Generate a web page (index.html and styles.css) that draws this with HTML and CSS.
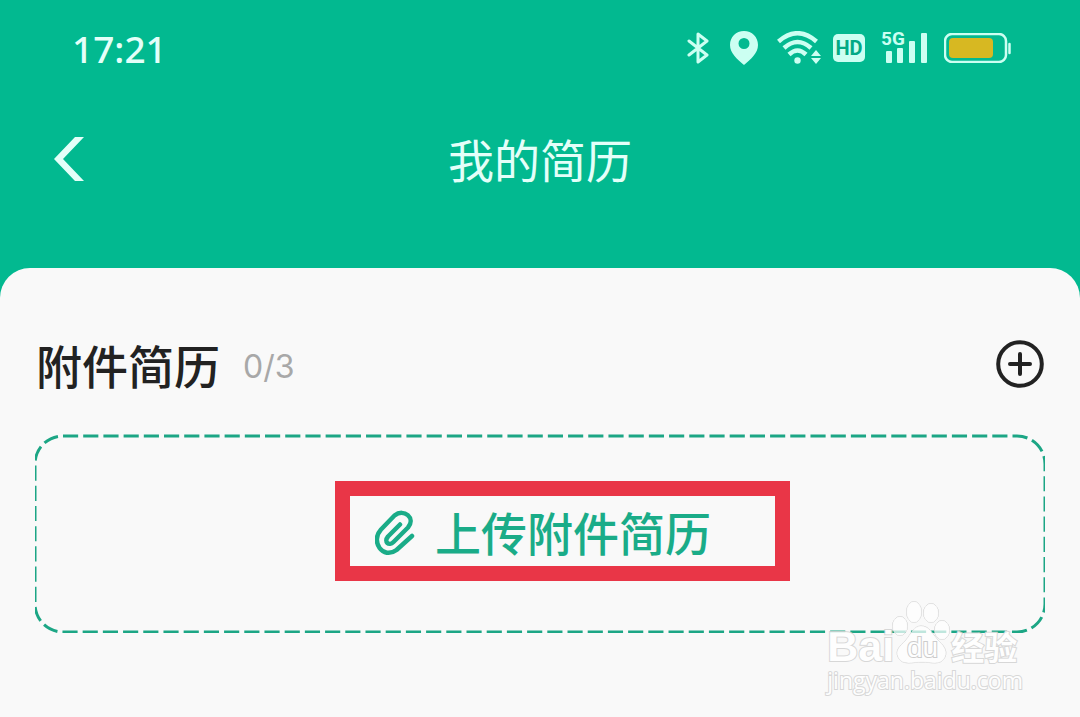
FILE: index.html
```html
<!DOCTYPE html>
<html lang="zh-CN">
<head>
  <meta charset="UTF-8">
  <meta name="viewport" content="width=device-width, initial-scale=1.0">
  <title>我的简历</title>
  <link rel="stylesheet" href="styles.css">
</head>
<body>
  <div class="status-bar">
    <span class="time">17:21</span>
    <div class="status-icons">
      <svg class="bluetooth" width="22" height="34" viewBox="0 0 22 34" fill="none" stroke="currentColor" stroke-width="3" stroke-linejoin="round" stroke-linecap="round">
        <path d="M2 10 L20 24 L11 31 V3 L20 10 L2 24"/>
      </svg>
      <svg class="location" width="28" height="34" viewBox="0 0 28 34">
        <path fill="currentColor" fill-rule="evenodd" d="M14 0C6 0 0 6 0 14c0 8 7 14 14 20 7-6 14-12 14-20C28 6 22 0 14 0Zm0 7a5.500 5.500 0 1 1 0 11 5.500 5.500 0 0 1 0-11Z"/>
      </svg>
      <svg class="wifi" width="44" height="34" viewBox="0 0 44 34">
        <g fill="none" stroke="currentColor" stroke-width="4.500">
          <path d="M1.500 10.500Q20.500-6 39.500 10.500"/>
          <path d="M7 17Q20.500 5 34 17"/>
          <path d="M12 23.500Q20.500 15.500 29 23.500"/>
        </g>
        <circle cx="20.500" cy="29.500" r="3.200" fill="currentColor"/>
        <path fill="currentColor" d="M39 19l5 6H34ZM39 33l5-6H34Z"/>
      </svg>
      <span class="hd">HD</span>
      <div class="signal">
        <span class="network">5G</span>
        <svg width="46" height="32" viewBox="0 0 46 32" fill="currentColor">
          <rect x="4" y="19" width="6" height="12" rx="1"/>
          <rect x="15" y="16" width="6" height="15" rx="1"/>
          <rect x="27" y="9" width="6" height="22" rx="1"/>
          <rect x="39" y="1" width="6" height="30" rx="1"/>
        </svg>
      </div>
      <svg class="battery" width="68" height="30" viewBox="0 0 68 30">
        <rect x="1" y="1" width="61" height="28" rx="7" fill="none" stroke="currentColor" stroke-width="2.500"/>
        <rect x="5" y="5" width="44" height="20" rx="4" fill="#d7b822"/>
        <path d="M65.500 11v9" stroke="currentColor" stroke-width="2.500" stroke-linecap="round"/>
      </svg>
    </div>
  </div>

  <header class="nav">
    <button class="back" aria-label="返回">
      <svg width="32" height="46" viewBox="0 0 32 46" fill="currentColor">
        <path d="M22 2H31L10 24 31 46H22L1 24Z"/>
      </svg>
    </button>
    <h1>我的简历</h1>
  </header>

  <main class="card">
    <div class="section-head">
      <h2>附件简历</h2>
      <span class="count">0/3</span>
      <button class="add" aria-label="添加">
        <svg width="48" height="48" viewBox="0 0 48 48" fill="none" stroke="currentColor" stroke-width="4" stroke-linecap="round">
          <circle cx="24" cy="24" r="21.800"/>
          <path d="M14 24h20M24 14v20"/>
        </svg>
      </button>
    </div>

    <div class="upload-area">
      <button class="upload">
        <svg class="dashes" aria-hidden="true">
          <rect class="dash-line" rx="28" ry="28" pathLength="2340"/>
        </svg>
        <span class="upload-label">
          <svg class="clip" width="40" height="46" viewBox="0 0 40 46" fill="none" stroke="currentColor" stroke-width="4.500" stroke-linecap="round" stroke-linejoin="round">
            <path d="M25 14.500L13 26.500C8.500 32 14 36.500 18.500 32L33 17.500C41 8 29 -2 19.500 5.500L6 19.500C-5 31.500 8 50 21.500 40L37 26"/>
          </svg>
          <span>上传附件简历</span>
          <span class="highlight"></span>
        </span>
      </button>

      <div class="watermark">
        <div class="brand">
          <span>Bai</span>
          <svg width="50" height="66" viewBox="0 0 50 66">
            <g class="paw">
              <ellipse cx="6" cy="26" rx="7.500" ry="9.500"/>
              <ellipse cx="20" cy="12" rx="7.500" ry="10.500"/>
              <ellipse cx="37" cy="13" rx="7.500" ry="9.500"/>
              <ellipse cx="48" cy="30" rx="7.500" ry="9.500"/>
              <path d="M27 26C20 26 17 34 12 40C6 46 1 50 4 57C8 66 19 62 28 62C37 62 47 66 51 57C54 50 49 45 43 39C38 33 35 26 27 26Z"/>
            </g>
            <text class="du" x="13" y="57">du</text>
          </svg>
          <span class="jingyan">经验</span>
        </div>
        <div class="site">jingyan.baidu.com</div>
      </div>
    </div>
  </main>
</body>
</html>
```

FILE: styles.css
```css
* {
  box-sizing: border-box;
}

body {
  margin: 0;
  min-height: 100vh;
  display: flex;
  flex-direction: column;
  background-color: #02b990;
  font-family: "Noto Sans CJK SC", sans-serif;
}

button {
  padding: 0;
  border: none;
  background: none;
  color: inherit;
  font: inherit;
  cursor: pointer;
}

svg {
  display: block;
}

h1,
h2 {
  margin: 0;
}

.status-bar {
  display: flex;
  align-items: center;
  justify-content: space-between;
  height: 96px;
  padding: 0 68px 0 72px;
  color: #ccfff2;
}

.time {
  font-family: "Noto Sans", sans-serif;
  font-size: 37px;
  font-weight: 500;
  color: #e4fff9;
}

.status-icons {
  display: flex;
  align-items: center;
}

.location {
  margin-left: 21px;
}

.wifi {
  margin-left: 19px;
}

.hd {
  width: 32px;
  margin-left: 12px;
  border-radius: 5px;
  background-color: #ccfff2;
  color: #02a985;
  font-family: Roboto, sans-serif;
  font-size: 20px;
  font-weight: 700;
  line-height: 28px;
  text-align: center;
}

.signal {
  position: relative;
  margin-left: 17px;
}

.network {
  position: absolute;
  top: -2px;
  left: -1px;
  font-family: Roboto, sans-serif;
  font-size: 19px;
  font-weight: 700;
  line-height: 18px;
}

.battery {
  margin-left: 16px;
}

.nav {
  display: grid;
  grid-template-columns: 1fr auto 1fr;
  align-items: center;
  height: 124px;
  padding: 0 53px;
  color: #e4fff9;
}

.back {
  justify-self: start;
}

.nav h1 {
  font-size: 46px;
  font-weight: 400;
}

.card {
  flex: 1;
  margin-top: 48px;
  padding: 60px 36px 24px;
  border-radius: 30px 30px 0 0;
  background-color: #f9f9f9;
}

.section-head {
  display: flex;
  align-items: center;
  height: 72px;
}

.section-head h2 {
  color: #222;
  font-size: 46px;
  font-weight: 500;
}

.count {
  margin: 4px 0 0 23px;
  color: #a8a8a8;
  font-family: Inter, sans-serif;
  font-size: 32px;
}

.add {
  margin-left: auto;
  color: #222;
}

.upload-area {
  position: relative;
  margin: 34px -1px 0;
}

.upload {
  position: relative;
  display: flex;
  align-items: center;
  justify-content: center;
  width: 100%;
  height: 199px;
  padding: 0 0 5px 6px;
  color: #1aac88;
}

.dashes {
  position: absolute;
  top: 0;
  left: 0;
  width: 100%;
  height: 100%;
}

.dash-line {
  x: 0;
  y: 2px;
  width: 100%;
  height: calc(100% - 3px);
  fill: none;
  stroke: #1ca685;
  stroke-width: 3px;
  stroke-dasharray: 15 5;
}

.upload-label {
  position: relative;
  display: flex;
  align-items: center;
  gap: 20px;
  font-size: 46px;
  font-weight: 500;
  line-height: 70px;
}

.clip {
  margin-top: 4px;
}

.highlight {
  position: absolute;
  inset: -15px -79px -15px -40px;
  border: 15px solid #e93647;
}

.watermark {
  position: absolute;
  top: 166px;
  right: 22px;
  color: #fff;
  font-family: "Liberation Sans", sans-serif;
  -webkit-text-stroke: 2px #d4d4d4;
  paint-order: stroke fill;
  opacity: 0.9;
}

.brand {
  display: flex;
  align-items: flex-end;
  height: 66px;
  font-size: 43px;
  font-weight: 700;
  line-height: 40px;
}

.brand svg {
  overflow: visible;
}

.paw {
  fill: #fff;
  fill-opacity: 0.8;
  stroke: #cfcfcf;
  stroke-width: 1px;
}

.du {
  font-size: 28px;
  font-weight: 400;
  fill: #fff;
  stroke: #c8c8c8;
  stroke-width: 2px;
}

.jingyan {
  margin-left: 7px;
  font-family: "Noto Sans CJK SC", sans-serif;
  font-size: 33px;
}

.site {
  font-family: "Open Sans", sans-serif;
  font-size: 23px;
  line-height: 28px;
}
```
